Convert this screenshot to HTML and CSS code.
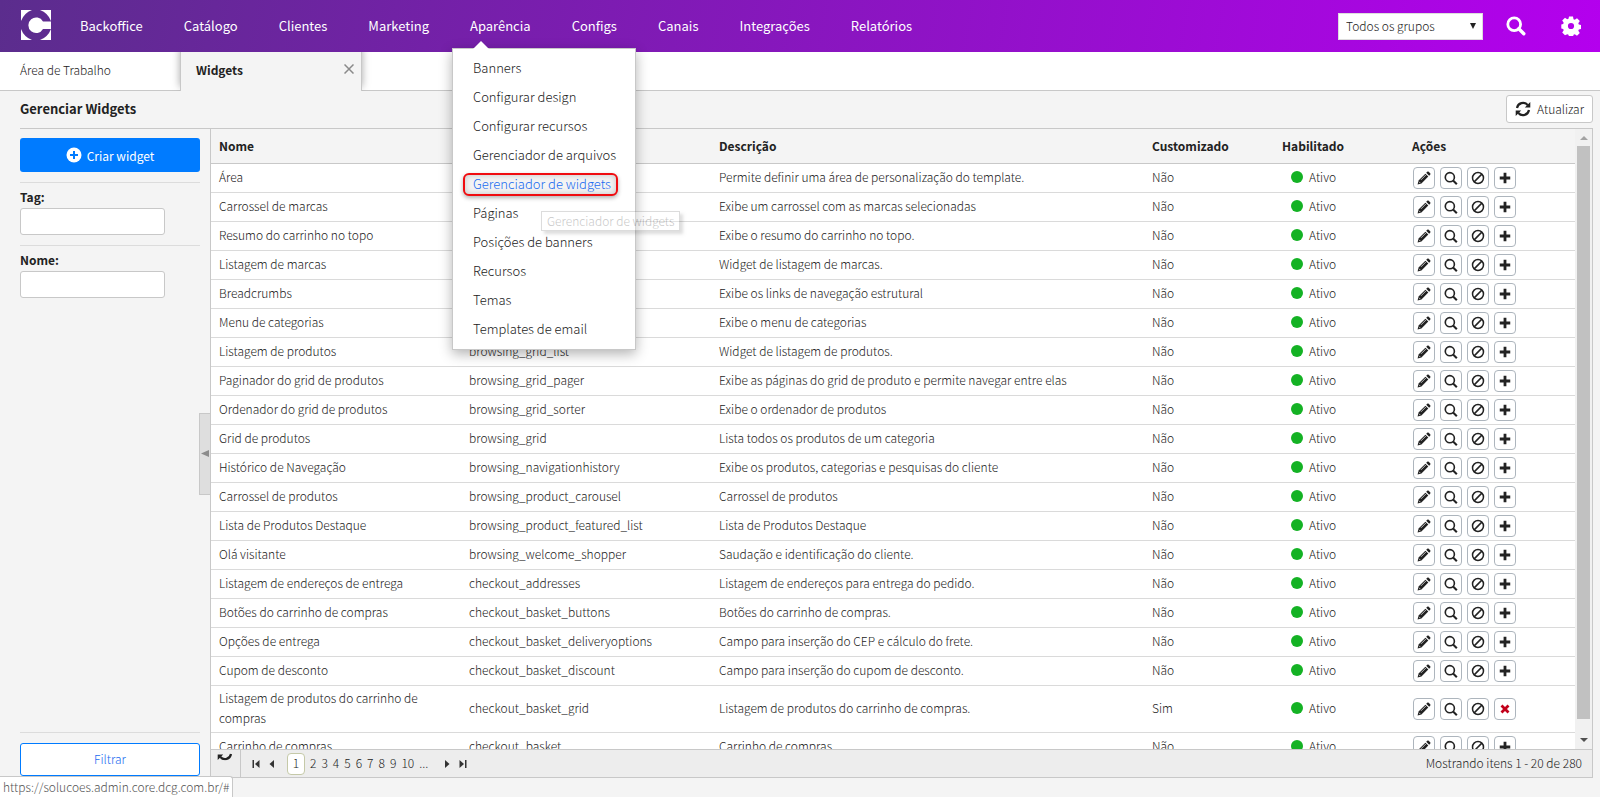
FILE: index.html
```html
<!DOCTYPE html>
<html lang="pt-BR">
<head>
<meta charset="utf-8">
<title>Gerenciar Widgets</title>
<link rel="stylesheet" href="styles.css">
</head>
<body>
<svg class="sprite" aria-hidden="true">
  <symbol id="i-search" viewBox="0 0 20 20"><circle cx="8.2" cy="8.2" r="6.4" fill="none" stroke="currentColor" stroke-width="2.8"/><path d="M12.8 12.8l5 5" stroke="currentColor" stroke-width="3.4" stroke-linecap="round"/></symbol>
  <symbol id="i-gear" viewBox="0 0 20 20"><path fill="currentColor" fill-rule="evenodd" d="M8 .500h4l.5 2.700 1.300.5 2.200-1.500 2.800 2.800-1.500 2.200.5 1.300 2.200.5v4l-2.200.5-.5 1.300 1.500 2.200-2.800 2.800-2.200-1.500-1.300.5-.5 2.200H8l-.5-2.200-1.300-.5L4 19.300l-2.800-2.800 1.500-2.200-.5-1.300L.3 12.500v-4L2.200 8l.5-1.300L1.200 4.500 4 1.700l2.200 1.500 1.300-.5zM10 6.900a3.100 3.100 0 1 0 0 6.200 3.100 3.100 0 0 0 0-6.200z"/></symbol>
  <symbol id="i-refresh" viewBox="0 0 16 16"><path d="M2 7a6.100 6.100 0 0 1 10.600-3M14 9a6.100 6.100 0 0 1-10.600 3" fill="none" stroke="currentColor" stroke-width="2.200"/><path d="M15.300 1v5.500H9.800zM.700 15V9.500h5.500z" fill="currentColor"/></symbol>
  <symbol id="i-pencil" viewBox="0 0 12 12"><path fill="currentColor" d="M.5 11.500l.8-3.300 5.900-5.900 2.500 2.500-5.900 5.900zM7.900 1.600l.9-.9c.4-.4.900-.3 1.200 0l1.300 1.300c.3.3.4.8 0 1.200l-.9.9z"/><path d="M1.700 9.200l1.100 1.100M3.400 7.600L7.600 3.400" stroke="#fff" stroke-width=".6"/></symbol>
  <symbol id="i-ban" viewBox="0 0 12 12"><circle cx="6" cy="6" r="4.700" fill="none" stroke="currentColor" stroke-width="1.300"/><path d="M2.700 9.300l6.600-6.600" stroke="currentColor" stroke-width="1.300"/></symbol>
  <symbol id="i-plus" viewBox="0 0 12 12"><path d="M6 1.500v9M1.500 6h9" stroke="currentColor" stroke-width="2.400"/></symbol>
  <symbol id="i-x" viewBox="0 0 12 12"><path d="M3 3l6 6M9 3l-6 6" stroke="currentColor" stroke-width="2.400"/></symbol>
  <symbol id="i-lens" viewBox="0 0 12 12"><circle cx="5" cy="5.300" r="3.900" fill="none" stroke="currentColor" stroke-width="1.400"/><path d="M7.800 8.100l3.200 3.200" stroke="currentColor" stroke-width="1.800"/></symbol>
</svg>
<div class="app">
  <header class="topbar">
    <svg class="logo" viewBox="0 0 30 30" role="img" aria-label="Logo"><path fill="#fff" d="M0 0h11Q3 3 0 11zM19 0h11v11Q27 3 19 0zM0 19q3 8 11 11H0zM30 19v11H19q8-3 11-11z"/><path fill="#fff" d="M30 11.500H22A7.800 7.800 0 1 0 22 19h8z"/></svg>
    <nav class="nav">
      <a href="#">Backoffice</a><a href="#">Catálogo</a><a href="#">Clientes</a><a href="#">Marketing</a>
      <div class="nav-open"><a href="#">Aparência</a>
        <div class="menu">
          <a href="#">Banners</a><a href="#">Configurar design</a><a href="#">Configurar recursos</a><a href="#">Gerenciador de arquivos</a>
          <a href="#" class="current">Gerenciador de widgets</a>
          <a href="#">Páginas</a><a href="#">Posições de banners</a><a href="#">Recursos</a><a href="#">Temas</a><a href="#">Templates de email</a>
          <span class="tip" role="tooltip">Gerenciador de widgets</span>
        </div>
      </div>
      <a href="#">Configs</a><a href="#">Canais</a><a href="#">Integrações</a><a href="#">Relatórios</a>
    </nav>
    <div class="group">
      <select aria-label="Grupos"><option>Todos os grupos</option></select>
      <svg class="caret" viewBox="0 0 6 6"><path d="M0 0h6L3 6z"/></svg>
    </div>
    <button class="top-icon" aria-label="Buscar"><svg><use href="#i-search"/></svg></button>
    <button class="top-icon" aria-label="Configurações"><svg><use href="#i-gear"/></svg></button>
  </header>
  <div class="tabs">
    <a class="tab" href="#">Área de Trabalho</a>
    <div class="tab active"><span>Widgets</span><button class="close" aria-label="Fechar"><svg viewBox="0 0 10 10"><path d="M.5.5l9 9M9.500.5l-9 9" stroke="currentColor" stroke-width="1.500"/></svg></button></div>
  </div>
  <main class="page">
    <div class="title">
      <h1>Gerenciar Widgets</h1>
      <button class="refresh"><svg><use href="#i-refresh"/></svg><span>Atualizar</span></button>
    </div>
    <div class="body">
      <form class="side">
        <button type="button" class="create"><svg viewBox="0 0 16 16"><circle cx="8" cy="8" r="7.500" fill="#fff"/><path d="M8 4v8M4 8h8" stroke="#007bff" stroke-width="2"/></svg>Criar widget</button>
        <div class="field"><label for="tag">Tag:</label><input id="tag" type="text"></div>
        <div class="field"><label for="nome">Nome:</label><input id="nome" type="text"></div>
        <div class="filter"><button type="button">Filtrar</button></div>
      </form>
      <div class="gutter"><button aria-label="Recolher"><svg viewBox="0 0 8 7"><path d="M8 0v7L0 3.500z" fill="#8c8c8c"/></svg></button></div>
      <section class="grid">
        <div class="view">
          <div class="scroll">
            <table>
              <colgroup><col class="c-name"><col class="c-key"><col><col class="c-flag"><col class="c-flag"><col class="c-act"></colgroup>
              <thead><tr><th>Nome</th><th>Chave</th><th>Descrição</th><th>Customizado</th><th>Habilitado</th><th>Ações</th></tr></thead>
              <tbody id="rows"></tbody>
            </table>
          </div>
          <div class="bar"><svg viewBox="0 0 8 4"><path d="M0 4h8L4 0z" fill="#a3a3a3"/></svg><div class="track"><div class="thumb"></div></div><svg viewBox="0 0 8 4"><path d="M0 0h8L4 4z" fill="#505050"/></svg></div>
        </div>
        <footer class="pager">
          <button class="reload" aria-label="Recarregar"><svg><use href="#i-refresh"/></svg></button>
          <button class="step" aria-label="Primeira"><svg viewBox="0 0 8 8"><path d="M.5 0H2v8H.5zM7.500 0v8L3 4z"/></svg></button>
          <button class="step" aria-label="Anterior"><svg viewBox="0 0 8 8"><path d="M6 0v8L1.500 4z"/></svg></button>
          <span class="pages"><a class="on" href="#">1</a><a href="#">2</a><a href="#">3</a><a href="#">4</a><a href="#">5</a><a href="#">6</a><a href="#">7</a><a href="#">8</a><a href="#">9</a><a href="#">10</a><a href="#">...</a></span>
          <button class="step" aria-label="Próxima"><svg viewBox="0 0 8 8"><path d="M2 0v8l4.500-4z"/></svg></button>
          <button class="step" aria-label="Última"><svg viewBox="0 0 8 8"><path d="M.5 0v8L5 4zM6 0h1.500v8H6z"/></svg></button>
          <span class="count">Mostrando itens 1 - 20 de 280</span>
        </footer>
      </section>
    </div>
  </main>
  <div class="status">https://solucoes.admin.core.dcg.com.br/#</div>
</div>
<script src="rows.js"></script>
</body>
</html>
```
FILE: styles.css
```css
* { box-sizing: border-box; }
body { margin: 0; font: 12px/19px "Noto Sans CJK JP", "Noto Sans", sans-serif; font-weight: 300; color: #222; }
button, input, select { font: inherit; color: inherit; margin: 0; padding: 0; }
button { background: none; border: 0; cursor: pointer; }
a { color: inherit; text-decoration: none; }
svg { display: block; flex: none; }
.sprite { position: absolute; width: 0; height: 0; }
.app { height: 100vh; display: flex; flex-direction: column; background: #f4f4f4; overflow: hidden; }

.topbar { flex: none; height: 52px; display: flex; align-items: center; padding: 0 18px 0 21px; background: linear-gradient(100deg, #5b2d8d, #b400ee); color: #fff; font-size: 13px; font-weight: 400; }
.logo { width: 30px; height: 30px; margin-right: 29px; margin-bottom: 2px; }
.nav { flex: 1; display: flex; align-items: center; gap: 41px; padding-bottom: 2px; }
.nav-open { position: relative; }
.menu { position: absolute; z-index: 5; left: -18px; top: 32px; width: 184px; padding: 5px 0 5px; display: flex; flex-direction: column; background: #fff; border: 1px solid #c8c8c8; box-shadow: 0 4px 12px rgba(0, 0, 0, .3); color: #222; font-weight: 300; }
.menu::before { content: ""; position: absolute; left: 20px; top: -8px; border: 8px solid transparent; border-top: 0; border-bottom-color: #fff; }
.menu a { height: 29px; padding: 4px 20px; white-space: nowrap; }
.menu .current { height: 23px; margin: 3px 17px 3px 10px; padding: 0 8px; line-height: 18px; border: 2px solid #f00c10; border-radius: 6px; color: #1a6cf0; background: #f4f4f4; box-shadow: 0 2px 4px rgba(0, 0, 0, .3), inset 0 0 6px rgba(0, 0, 0, .2); }
.tip { position: absolute; left: 88px; top: 162px; padding: 0 5px; font-size: 12px; line-height: 18px; white-space: nowrap; border: 1px solid #777; background: #fff; box-shadow: 3px 3px 3px rgba(0, 0, 0, .5); opacity: .25; }
.group { position: relative; width: 145px; margin-right: 22px; color: #222; font-size: 12px; font-weight: 300; }
.group select { appearance: none; width: 100%; height: 27px; padding: 0 7px 2px; border: 1px solid #ddd; border-radius: 0; background: #fff; }
.caret { position: absolute; right: 7px; top: 10px; width: 6px; height: 6px; fill: #222; }
.top-icon { width: 22px; display: flex; justify-content: center; color: #fff; }
.top-icon + .top-icon { margin-left: 33px; }
.top-icon svg { width: 20px; height: 20px; }

.tabs { flex: none; height: 39px; display: flex; background: #fff; border-bottom: 1px solid #c8c8c8; }
.tab { width: 180px; padding: 8px 20px; }
.active { display: flex; justify-content: space-between; width: 182px; height: 39px; padding: 8px 7px 0 15px; background: #f4f4f4; border: solid #c8c8c8; border-width: 0 1px; box-shadow: 0 -4px 8px rgba(0, 0, 0, .35); clip-path: inset(0 -10px 0 -10px); font-weight: 700; }
.close { width: 10px; height: 10px; margin-top: 4px; color: #8a8a8a; }
.close svg { width: 10px; height: 10px; }

.page { flex: 1; min-height: 0; display: flex; flex-direction: column; padding: 0 7px 19px 20px; }
.title { flex: none; height: 38px; display: flex; align-items: center; justify-content: space-between; border-bottom: 1px solid #c8c8c8; }
h1 { margin: 0; padding-bottom: 2px; font-size: 13px; font-weight: 700; }
.refresh { display: flex; align-items: center; gap: 6px; height: 28px; padding: 0 8px; margin-bottom: 2px; border: 1px solid #c8c8c8; border-radius: 3px; background: #fff; }
.refresh svg, .reload svg { width: 16px; height: 16px; }
.body { flex: 1; min-height: 0; display: flex; }
.side { width: 180px; display: flex; flex-direction: column; padding-top: 9px; }
.create { height: 34px; margin-bottom: 10px; display: flex; align-items: center; justify-content: center; gap: 5px; border-radius: 3px; background: #007bff; color: #fff; font-weight: 400; }
.create svg { width: 16px; height: 16px; }
.field { height: 63px; padding-top: 4px; border-top: 1px solid #dcdcdc; }
.field label { display: block; font-weight: 700; }
.field input { width: 145px; height: 27px; margin-top: 2px; padding: 0 6px; border: 1px solid #c8c8c8; border-radius: 3px; background: #fff; display: block; }
.filter { margin-top: auto; padding: 10px 0 2px; border-top: 1px solid #dcdcdc; }
.filter button { width: 100%; height: 33px; padding-bottom: 2px; border: 1px solid #007bff; border-radius: 3px; background: #fff; color: #1a6cf0; display: block; }
.gutter { width: 10px; display: flex; align-items: center; }
.gutter button { width: 11px; height: 82px; margin-left: -1px; flex: none; display: flex; align-items: center; justify-content: center; background: #dedede; border: 1px solid #c8c8c8; border-right: 0; }
.gutter svg { width: 8px; height: 7px; }

.grid { flex: 1; min-width: 0; display: flex; flex-direction: column; border: 1px solid #c8c8c8; border-top: 0; }
.view { flex: 1; min-height: 0; display: flex; background: #fff; }
.scroll { flex: 1; min-width: 0; overflow: hidden; }
table { width: 100%; table-layout: fixed; border-collapse: separate; border-spacing: 0; }
.c-name, .c-key { width: 250px; }
.c-flag { width: 130px; }
.c-act { width: 171px; }
th { height: 35px; padding: 0 8px 2px; text-align: left; font-weight: 700; background: #f4f4f4; border-bottom: 1px solid #c8c8c8; }
td { height: 29px; padding: 2px 8px 4px; line-height: 20px; border-bottom: 1px solid #dadada; }
td:last-child { padding: 3px 9px; }
.tall td { height: 47px; }
.on-state { display: flex; align-items: center; gap: 6px; padding-left: 9px; }
.on-state::before { content: ""; width: 12px; height: 12px; border-radius: 50%; background: #14b224; }
.acts { display: flex; gap: 5px; height: 22px; }
.acts button { width: 22px; height: 22px; display: flex; align-items: center; justify-content: center; border: 1px solid #adb5bd; border-radius: 4px; background: #fff; }
.acts svg { width: 14px; height: 14px; }
.acts .del { color: #c2001a; }
.bar { width: 17px; display: flex; flex-direction: column; align-items: center; padding: 7px 0; background: #f1f1f1; }
.bar svg { width: 8px; height: 4px; }
.track { flex: 1; width: 13px; margin: 6px 0 7px; }
.thumb { height: 98%; background: #c1c1c1; }

.pager { flex: none; height: 28px; display: flex; align-items: center; background: #ededed; border-top: 1px solid #c8c8c8; }
.reload { width: 30px; height: 27px; margin-right: 7px; padding-left: 6px; overflow: hidden; border-right: 1px solid #c8c8c8; }
.reload svg { clip-path: inset(8px 0 0 0); margin-top: -19px; }
.step { width: 16px; display: flex; justify-content: center; fill: #333; }
.step svg { width: 8px; height: 8px; }
.pages { display: flex; align-items: center; gap: 5px; margin: 0 11px 0 7px; }
.pages a { padding-bottom: 2px; }
.pages .on { width: 18px; height: 22px; line-height: 18px; text-align: center; border: 1px solid #c5c9a8; border-radius: 4px; background: #fff; }
.count { margin-left: auto; padding: 0 10px 2px 0; }
.status { position: fixed; z-index: 6; left: 0; bottom: 0; height: 21px; padding: 0 3px; background: #fff; border: 1px solid #c8c8c8; border-width: 1px 1px 0 0; border-radius: 0 3px 0 0; color: #555; }
```
FILE: rows.js
```js
const rows = [
  ["Área", "area", "Permite definir uma área de personalização do template."],
  ["Carrossel de marcas", "brand_carousel", "Exibe um carrossel com as marcas selecionadas"],
  ["Resumo do carrinho no topo", "basket_summary", "Exibe o resumo do carrinho no topo."],
  ["Listagem de marcas", "brand_list", "Widget de listagem de marcas."],
  ["Breadcrumbs", "breadcrumbs", "Exibe os links de navegação estrutural"],
  ["Menu de categorias", "category_menu", "Exibe o menu de categorias"],
  ["Listagem de produtos", "browsing_grid_list", "Widget de listagem de produtos."],
  ["Paginador do grid de produtos", "browsing_grid_pager", "Exibe as páginas do grid de produto e permite navegar entre elas"],
  ["Ordenador do grid de produtos", "browsing_grid_sorter", "Exibe o ordenador de produtos"],
  ["Grid de produtos", "browsing_grid", "Lista todos os produtos de um categoria"],
  ["Histórico de Navegação", "browsing_navigationhistory", "Exibe os produtos, categorias e pesquisas do cliente"],
  ["Carrossel de produtos", "browsing_product_carousel", "Carrossel de produtos"],
  ["Lista de Produtos Destaque", "browsing_product_featured_list", "Lista de Produtos Destaque"],
  ["Olá visitante", "browsing_welcome_shopper", "Saudação e identificação do cliente."],
  ["Listagem de endereços de entrega", "checkout_addresses", "Listagem de endereços para entrega do pedido."],
  ["Botões do carrinho de compras", "checkout_basket_buttons", "Botões do carrinho de compras."],
  ["Opções de entrega", "checkout_basket_deliveryoptions", "Campo para inserção do CEP e cálculo do frete."],
  ["Cupom de desconto", "checkout_basket_discount", "Campo para inserção do cupom de desconto."],
  ["Listagem de produtos do carrinho de compras", "checkout_basket_grid", "Listagem de produtos do carrinho de compras.", true],
  ["Carrinho de compras", "checkout_basket", "Carrinho de compras."]
];
const button = (icon, label, cls = "") =>
  `<button class="${cls}" aria-label="${label}"><svg><use href="#i-${icon}"/></svg></button>`;
document.getElementById("rows").innerHTML = rows.map(([name, key, text, custom]) => `
  <tr class="${custom ? "tall" : ""}"><td>${name}</td><td>${key}</td><td>${text}</td><td>${custom ? "Sim" : "Não"}</td>
  <td><div class="on-state">Ativo</div></td>
  <td><div class="acts">${button("pencil", "Editar")}${button("lens", "Visualizar")}${button("ban", "Desabilitar")}${custom ? button("x", "Excluir", "del") : button("plus", "Customizar")}</div></td></tr>`).join("");
```
